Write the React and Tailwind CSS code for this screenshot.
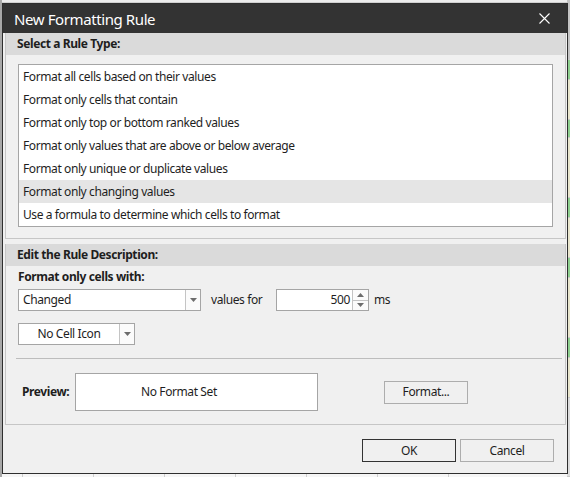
import React from "react";

const rules = [
  "Format all cells based on their values",
  "Format only cells that contain",
  "Format only top or bottom ranked values",
  "Format only values that are above or below average",
  "Format only unique or duplicate values",
  "Format only changing values",
  "Use a formula to determine which cells to format",
];

function Caret() {
  return (
    <svg width="7" height="4" viewBox="0 0 7 4">
      <path d="M0 0 H7 L3.5 4 Z" fill="#6d6d6d" />
    </svg>
  );
}

function Combo({ w, text, center }) {
  return (
    <div className={`flex h-[22px] border border-[#a5a5a5] bg-white ${w}`}>
      <div className={`flex-1 flex items-center ${center ? "justify-center" : "pl-[4px]"}`}>{text}</div>
      <div className="w-[15px] flex items-center justify-center border-l border-[#c4c4c4] bg-[#fbfbfb]">
        <Caret />
      </div>
    </div>
  );
}

const stripColors = [
  ["#c4c4c4", 60],
  ["#8fd08f", 20],
  ["#e8e5cc", 40],
  ["#8fd08f", 18],
  ["#e8e5cc", 60],
  ["#8fd08f", 20],
  ["#e8e5cc", 40],
  ["#8fd08f", 20],
  ["#e8e5cc", 60],
  ["#8fd08f", 20],
  ["#e8e5cc", 40],
  ["#dcdcdc", 79],
];

export default function App() {
  return (
    <div className="relative w-[570px] h-[477px] overflow-hidden bg-[#f6f6f6] font-['Noto_Sans',sans-serif]">
      {/* spreadsheet behind the dialog */}
      <div className="flex h-full">
        <div className="w-[2px] bg-[#a8a8a8]" />
        <div className="flex-1 flex flex-col">
          <div className="h-[3px] bg-[#ececec] border-b border-[#d0d0d0]" />
          <div className="flex-1" />
          <div className="h-[4px] flex">
            <div className="w-[21px] border-r border-[#cfcfcf]" />
            <div className="w-[71px] border-r border-[#cfcfcf]" />
            <div className="w-[71px] border-r border-[#cfcfcf]" />
            <div className="w-[71px] border-r border-[#cfcfcf]" />
            <div className="w-[71px] border-r border-[#cfcfcf]" />
            <div className="w-[71px] border-r border-[#cfcfcf]" />
            <div className="w-[71px] border-r border-[#cfcfcf]" />
          </div>
        </div>
        <div className="w-[3px] flex flex-col">
          {stripColors.map(([c, h], i) => (
            <div key={i} style={{ background: c, height: h }} className="border-b border-[#c8c8c8]" />
          ))}
        </div>
      </div>

      {/* dialog window */}
      <div className="absolute left-[2px] top-[3px] w-[566px] h-[471px] border border-[#2e2e2e] bg-[#f0f0f0] flex flex-col text-[12px] leading-[16px] tracking-[-0.4px] text-[#1e1e1e]">
        {/* title bar */}
        <div className="h-[29px] shrink-0 bg-[#333333] flex items-center justify-between pl-[11px] pr-[17px]">
          <span className="text-white text-[15px] leading-[20px] tracking-[-0.4px]">New Formatting Rule</span>
          <svg width="11" height="11" viewBox="0 0 11 11">
            <path d="M0.5 0.5 L10.5 10.5 M10.5 0.5 L0.5 10.5" stroke="#ffffff" strokeWidth="1.1" />
          </svg>
        </div>

        {/* group 1 */}
        <div className="ml-[2px] mr-[1px] border-x border-b border-[#c6c6c6] flex flex-col pb-[11px]">
          <div className="h-[22px] bg-[#dadada] flex items-center pl-[11px] font-bold">Select a Rule Type:</div>
          <div className="mt-[9px] ml-[12px] mr-[12px] h-[163px] border border-[#a5a5a5] bg-white flex flex-col">
            {rules.map((r, i) => (
              <div
                key={r}
                className={`h-[23px] shrink-0 flex items-center pl-[4px] ${i === 5 ? "bg-[#e5e5e5]" : ""}`}
              >
                {r}
              </div>
            ))}
          </div>
        </div>

        {/* group 2 */}
        <div className="mt-[5px] ml-[2px] mr-[1px] border-x border-b border-[#c6c6c6] flex flex-col pb-[13px]">
          <div className="h-[22px] bg-[#dadada] flex items-center pl-[11px] font-bold">Edit the Rule Description:</div>
          <div className="mt-[3px] ml-[12px] font-bold">Format only cells with:</div>
          <div className="mt-[4px] ml-[12px] flex items-center">
            <Combo w="w-[183px]" text="Changed" />
            <span className="ml-[10px] w-[65px]">values for</span>
            <div className="flex h-[22px] w-[93px] border border-[#a5a5a5] bg-white">
              <div className="flex-1 flex items-center justify-end pr-[2px]">500</div>
              <div className="w-[16px] flex flex-col border-l border-[#c4c4c4] bg-[#fbfbfb]">
                <div className="flex-1 flex items-center justify-center border-b border-[#c4c4c4]">
                  <svg width="7" height="4" viewBox="0 0 7 4">
                    <path d="M0 4 H7 L3.5 0 Z" fill="#6d6d6d" />
                  </svg>
                </div>
                <div className="flex-1 flex items-center justify-center">
                  <Caret />
                </div>
              </div>
            </div>
            <span className="ml-[5px]">ms</span>
          </div>
          <div className="mt-[12px] ml-[12px]">
            <Combo w="w-[117px]" text="No Cell Icon" center />
          </div>
          <div className="mt-[13px] ml-[10px] mr-[3px] h-px bg-[#bdbdbd]" />
          <div className="mt-[14px] ml-[16px] flex items-center">
            <span className="font-bold w-[53px]">Preview:</span>
            <div className="w-[243px] h-[38px] border border-[#a5a5a5] bg-white flex items-center pl-[65px]">
              No Format Set
            </div>
            <button className="ml-[66px] w-[84px] h-[23px] border border-[#adadad] bg-[#f0f0f0] flex items-center justify-center">
              Format...
            </button>
          </div>
        </div>

        {/* buttons */}
        <div className="mt-[14px] flex justify-end pr-[13px] gap-[4px]">
          <button className="w-[94px] h-[23px] border border-[#333333] bg-[#f0f0f0] flex items-center justify-center">
            OK
          </button>
          <button className="w-[94px] h-[23px] border border-[#adadad] bg-[#f0f0f0] flex items-center justify-center">
            Cancel
          </button>
        </div>
      </div>
    </div>
  );
}
